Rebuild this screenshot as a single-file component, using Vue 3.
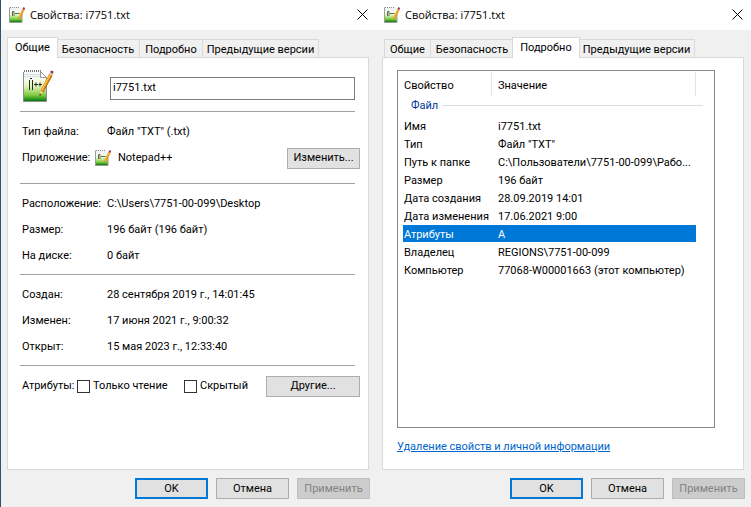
<script setup>
import { ref, defineComponent, h } from 'vue'

const tabs = ['Общие', 'Безопасность', 'Подробно', 'Предыдущие версии']
const dialogs = [
  { id: 'general', active: 0 },
  { id: 'details', active: 2 },
]
const fileName = ref('i7751.txt')
const location = [
  ['Расположение:', 'C:\\Users\\7751-00-099\\Desktop'],
  ['Размер:', '196 байт (196 байт)'],
  ['На диске:', '0 байт'],
]
const dates = [
  ['Создан:', '28 сентября 2019 г., 14:01:45'],
  ['Изменен:', '17 июня 2021 г., 9:00:32'],
  ['Открыт:', '15 мая 2023 г., 12:33:40'],
]
const properties = [
  ['Имя', 'i7751.txt'],
  ['Тип', 'Файл "TXT"'],
  ['Путь к папке', 'C:\\Пользователи\\7751-00-099\\Рабо...'],
  ['Размер', '196 байт'],
  ['Дата создания', '28.09.2019 14:01'],
  ['Дата изменения', '17.06.2021 9:00'],
  ['Атрибуты', 'A'],
  ['Владелец', 'REGIONS\\7751-00-099'],
  ['Компьютер', '77068-W00001663 (этот компьютер)'],
]
const selected = ref('Атрибуты')

const shape = (d, fill) => h('path', { d, fill })
const line = (d, stroke, width, dash) =>
  h('path', { d, fill: 'none', stroke, 'stroke-width': width, 'stroke-dasharray': dash })

const largeArt = (paint) => [
  shape('M1 1H18L25 8V32H1Z', '#f6f8f8'),
  shape('M2 8H24V31H2Z', paint),
  line('M2 4.5H18M2 6.5H18', '#d9dee3', 1),
  line('M1.5 32V2M24.5 7V31.5H1', '#8b8f8b', 1),
  line('M2 1H19', '#777', 2, '1 1'),
  h('path', { d: 'M18.5 1.5L24.5 7.5H18.5Z', fill: '#fff', stroke: '#999' }),
  line('M7.5 20V10M8 8.5H10M10.5 10V20', '#263022', 1),
  line('M12 14.5H16M14 12.5V16.5M16.5 14.5H20M18 12.5V16.5', '#263022', 1),
  shape('M17.5 26L18.3 20.5L27.3 3.5L30.5 5.5L21 22.5Z', '#e9961b'),
  line('M19.5 20.5L28.5 4.5', '#ffd34c', 1),
  line('M21 22L30 5.5', '#a8651c', 1),
  shape('M18.3 20.5L21 22.3L17.5 26Z', '#e8cda0'),
  shape('M17.8 23.5L19.2 24.5L17.5 26.5Z', '#312a28'),
  shape('M27 3.5L28 2L31 4L30.2 5.8Z', '#c8c8ce'),
  shape('M28 2L29.5 0.5L31.5 1.5L31 4Z', '#92343a'),
]
const smallArt = (paint) => [
  shape('M1 1H25L27 4V31H1Z', '#f1f3f4'),
  shape('M2 8H26V30H2Z', paint),
  line('M1 31V1M26 12V31H0', '#9a9e9a', 2),
  line('M2 1H20', '#888', 2, '2 2'),
  line('M7 18V9H10V18', '#5d6a58', 2),
  line('M12 13H21', '#5d6a58', 2),
  shape('M18 26L19 20L27 4L31 6L23 22Z', '#e9961b'),
  line('M20 21L28 5', '#ffd34c', 1),
  shape('M27 4L29 0L32 2L31 6Z', '#92343a'),
]

// Notepad++ document icon
const NoteIcon = defineComponent({
  props: { gid: String, large: Boolean },
  setup: (props) => () =>
    h('svg', { viewBox: '0 0 32 32', 'aria-hidden': 'true' }, [
      h('defs', [
        h('linearGradient', { id: props.gid, x1: 0, y1: 0, x2: 0, y2: 1 }, [
          h('stop', { offset: '0', 'stop-color': '#f8fbf2' }),
          h('stop', { offset: '0.35', 'stop-color': '#e4f5c0' }),
          h('stop', { offset: '0.75', 'stop-color': '#7bcb3c' }),
          h('stop', { offset: '1', 'stop-color': '#087a12' }),
        ]),
      ]),
      ...(props.large ? largeArt : smallArt)(`url(#${props.gid})`),
    ]),
})
</script>

<template>
  <main class="desktop">
    <section v-for="d in dialogs" :key="d.id" class="dialog">
      <header class="titlebar">
        <NoteIcon class="icon-small" :gid="d.id + '-title'" />
        <h1>Свойства: i7751.txt</h1>
        <button class="close" type="button" aria-label="Закрыть">
          <svg viewBox="0 0 11 11"><path d="M0.5 0.5L10.5 10.5M10.5 0.5L0.5 10.5" /></svg>
        </button>
      </header>

      <nav class="tabs" role="tablist">
        <button
          v-for="(t, i) in tabs"
          :key="t"
          type="button"
          role="tab"
          :aria-selected="i === d.active"
          :class="['tab', { active: i === d.active }]"
        >{{ t }}</button>
      </nav>

      <div v-if="d.id === 'general'" class="panel general">
        <div class="group file">
          <NoteIcon class="icon-large" gid="general-file" large />
          <input v-model="fileName" class="name" type="text" aria-label="Имя файла" />
        </div>
        <div class="group type">
          <div class="row"><span class="label">Тип файла:</span><span>Файл "TXT" (.txt)</span></div>
          <div class="row">
            <span class="app-label">Приложение:</span>
            <NoteIcon class="icon-small" gid="general-app" />
            <span class="app">Notepad++</span>
            <button type="button" class="btn">Изменить...</button>
          </div>
        </div>
        <div class="group">
          <div v-for="r in location" :key="r[0]" class="row">
            <span class="label">{{ r[0] }}</span><span>{{ r[1] }}</span>
          </div>
        </div>
        <div class="group">
          <div v-for="r in dates" :key="r[0]" class="row">
            <span class="label">{{ r[0] }}</span><span>{{ r[1] }}</span>
          </div>
        </div>
        <div class="group">
          <div class="row">
            <span class="attr-label">Атрибуты:</span>
            <label class="check readonly"><input type="checkbox" />Только чтение</label>
            <label class="check"><input type="checkbox" />Скрытый</label>
            <button type="button" class="btn wide">Другие...</button>
          </div>
        </div>
      </div>

      <div v-else class="panel details">
        <div class="listbox">
          <table>
            <colgroup><col class="c-name" /><col /><col class="c-end" /></colgroup>
            <thead>
              <tr><th>Свойство</th><th>Значение</th><td></td></tr>
            </thead>
            <tbody>
              <tr class="section">
                <th colspan="3"><div class="section-title">Файл</div></th>
              </tr>
              <tr
                v-for="r in properties"
                :key="r[0]"
                :class="{ selected: selected === r[0] }"
                @click="selected = r[0]"
              ><td>{{ r[0] }}</td><td>{{ r[1] }}</td><td></td></tr>
            </tbody>
          </table>
        </div>
        <a href="#">Удаление свойств и личной информации</a>
      </div>

      <footer class="actions">
        <button type="button" class="btn default">OK</button>
        <button type="button" class="btn">Отмена</button>
        <button type="button" class="btn" disabled>Применить</button>
      </footer>
    </section>
  </main>
</template>

<style>
body {
  background: #f0f0f0;
}
</style>

<style scoped>
.desktop {
  display: flex;
  box-sizing: border-box;
  min-height: 100vh;
  border-left: 1px solid #35506b;
  background: #f0f0f0;
  color: #000;
  font: 11px/18px Roboto, "Liberation Sans", sans-serif;
}
.dialog {
  display: flex;
  flex: 1 1 0;
  min-width: 0;
  flex-direction: column;
}
button,
input {
  margin: 0;
  color: inherit;
  font: inherit;
}
.titlebar {
  display: flex;
  align-items: center;
  height: 30px;
  padding: 0 8px;
  background: #fff;
}
h1 {
  flex: 1;
  margin: 0 0 0 5px;
  font: 11px/18px "Open Sans", "Noto Sans", sans-serif;
}
.icon-small {
  width: 16px;
  height: 16px;
}
.icon-large {
  width: 32px;
  height: 32px;
}
.close {
  display: flex;
  padding: 0 0 2px;
  border: 0;
  background: none;
}
.close svg {
  width: 11px;
  height: 11px;
  fill: none;
  stroke: #000;
}
.tabs {
  display: flex;
  align-items: flex-end;
  height: 20px;
  margin: 7px 7px 0 8px;
}
.tab {
  height: 18px;
  padding: 0 5px;
  border: 1px solid #d9d9d9;
  border-width: 1px 1px 0 0;
  background: #f0f0f0;
  line-height: 19px;
  white-space: nowrap;
}
.tab:first-child {
  border-left-width: 1px;
}
.tab:last-child {
  padding: 0 4px;
}
.tab.active {
  z-index: 1;
  height: 21px;
  margin: 0 -1px -1px -2px;
  padding: 0 7px 2px;
  border-left-width: 1px;
  background: #fff;
}
.panel {
  flex: 1;
  margin: 0 7px 0 6px;
  border: 1px solid #d9d9d9;
  background: #fff;
}
.general {
  padding: 0 13px 0 12px;
}
.group {
  padding: 7px 0 5px 2px;
  border-bottom: 1px solid #a0a0a0;
}
.group:last-child {
  border-bottom: 0;
}
.group.type {
  padding-bottom: 12px;
}
.group.file {
  display: flex;
  align-items: center;
  padding: 12px 0 9px 2px;
}
.name {
  flex: 1;
  box-sizing: border-box;
  min-width: 0;
  height: 23px;
  margin: 4px 0 0 56px;
  padding: 0 2px 2px;
  border: 1px solid #7a7a7a;
  outline: 0;
  background: #fff;
}
.row {
  display: flex;
  align-items: center;
  height: 26px;
}
.label {
  width: 85px;
}
.app-label {
  width: 73px;
}
.app {
  margin-left: 7px;
}
.attr-label {
  width: 55px;
}
.btn {
  box-sizing: border-box;
  width: 73px;
  height: 21px;
  padding: 0;
  border: 1px solid #adadad;
  background: #e1e1e1;
}
.row .btn {
  margin: 0 -5px 0 auto;
}
.btn.wide {
  width: 94px;
}
.btn.default {
  border: 2px solid #0078d7;
}
.btn:disabled {
  border-color: #bfbfbf;
  background: #ccc;
  color: #838383;
}
.check {
  display: flex;
  align-items: center;
  gap: 3px;
}
.readonly {
  width: 107px;
}
.check input {
  box-sizing: border-box;
  width: 13px;
  height: 13px;
  border: 1px solid #333;
  background: #fff;
  appearance: none;
}
.details {
  display: flex;
  flex-direction: column;
  padding: 12px 28px 13px 14px;
}
.listbox {
  flex: 1;
  margin-bottom: 10px;
  padding: 1px 11px 0 5px;
  border: 1px solid #828790;
}
table {
  width: 100%;
  table-layout: fixed;
  border-collapse: separate;
  border-spacing: 0;
}
.c-name {
  width: 89px;
}
.c-end {
  width: 7px;
}
th,
td {
  height: 15px;
  padding: 2px 0 0 1px;
  border-bottom: 1px solid #fff;
  line-height: 15px;
  font-weight: 400;
  text-align: left;
  white-space: nowrap;
}
th + th,
td + td {
  padding-left: 6px;
}
thead th {
  height: 22px;
  border-right: 1px solid #e5e5e5;
  border-bottom: 0;
}
thead td {
  padding: 0;
  border: 0;
}
.section th {
  height: 18px;
  padding-left: 8px;
  vertical-align: top;
}
.section-title {
  display: flex;
  align-items: center;
  gap: 4px;
  color: #003399;
}
.section-title::after {
  flex: 1;
  height: 1px;
  background: #d5dfe5;
  content: "";
}
td:last-child {
  padding: 0;
}
.selected td:not(:last-child) {
  background: #0078d7;
  background-clip: padding-box;
  color: #fff;
}
a {
  align-self: flex-start;
  color: #0066cc;
}
.actions {
  display: flex;
  justify-content: flex-end;
  gap: 8px;
  padding: 8px 6px;
}
</style>
